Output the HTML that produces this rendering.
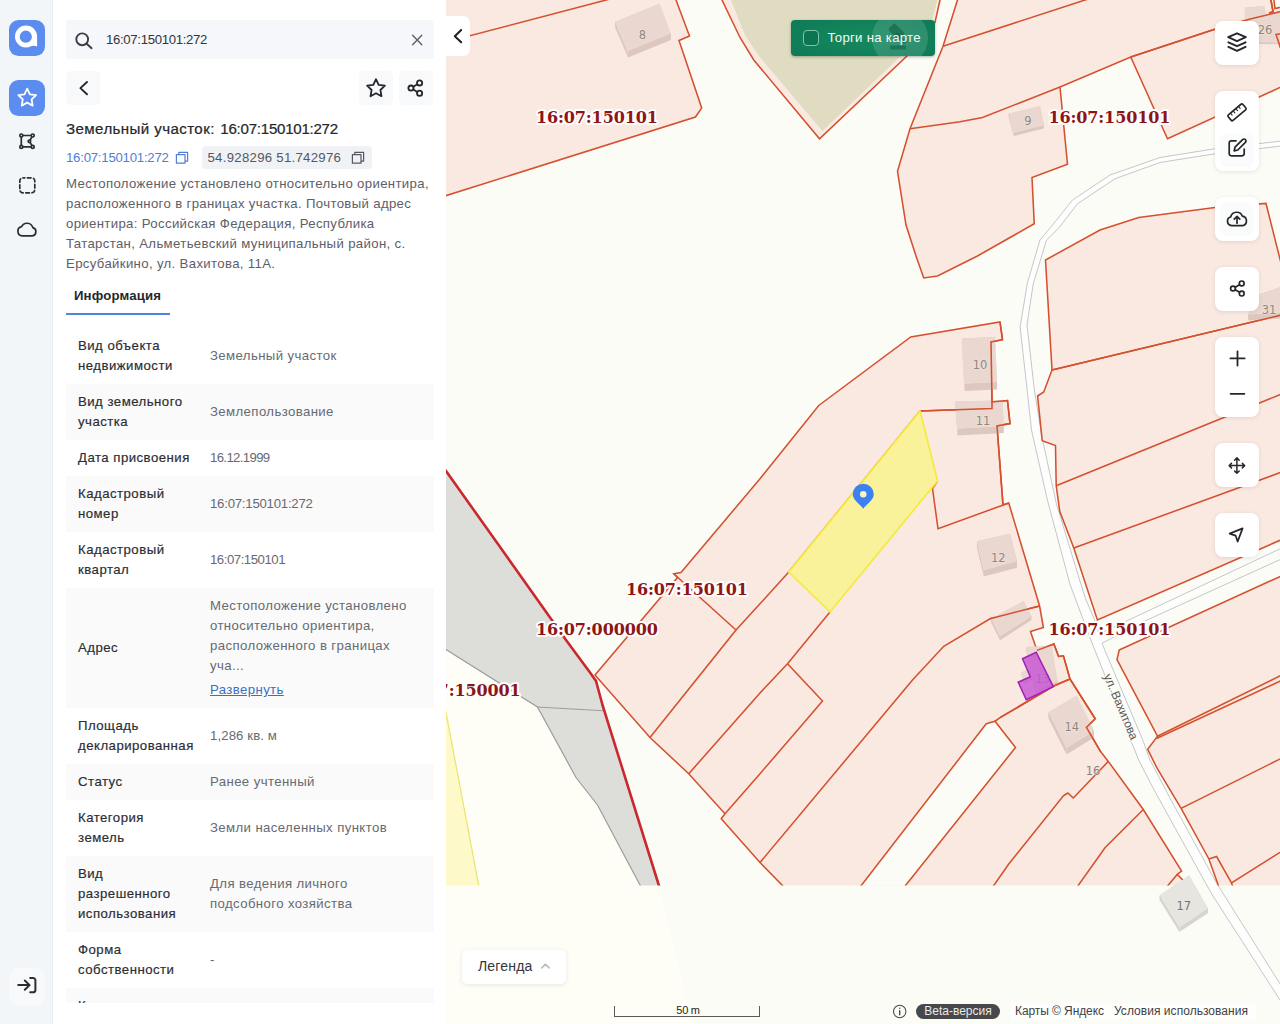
<!DOCTYPE html>
<html lang="ru">
<head>
<meta charset="utf-8">
<title>Земельный участок: 16:07:150101:272</title>
<style>
*{box-sizing:border-box;margin:0;padding:0}
html,body{width:1280px;height:1024px;overflow:hidden;background:#fff;font-family:"Liberation Sans",sans-serif;color:#2b2d33}
.abs{position:absolute}
#side{position:absolute;left:0;top:0;width:53px;height:1024px;background:#f3f6f9;border-right:1px solid #e9edf1}
#panel{position:absolute;left:53px;top:0;width:393px;height:1024px;background:#fff;overflow:hidden}
#map{position:absolute;left:446px;top:0;width:834px;height:1024px;background:#fcfcf7;overflow:hidden}
.sbtn{position:absolute;left:9px;width:36px;height:36px;border-radius:9.5px}
.blue{background:#5b8cef}
.search{position:absolute;left:13px;top:20px;width:368px;height:39px;background:#f5f7fa;border-radius:3px}
.search span{position:absolute;left:40px;top:11px;font-size:13.2px;line-height:17px;color:#33363d;letter-spacing:-0.33px;white-space:nowrap}
.ibtn{position:absolute;width:34px;height:34px;background:#f8f9fb;border-radius:5px;top:71px}
h1{position:absolute;left:13px;top:119px;font-size:15.1px;line-height:20px;font-weight:400;color:#25272c;letter-spacing:0.4px;white-space:nowrap;-webkit-text-stroke:0.22px #25272c}
h1 i{font-style:normal;letter-spacing:-0.26px;margin-left:1px}
.cn{position:absolute;left:13px;top:150px;font-size:13.2px;line-height:16px;color:#4f7fd6;letter-spacing:-0.23px;white-space:nowrap}
.coord{position:absolute;left:148.5px;top:146px;width:170px;height:23px;background:#f0f2f5;border-radius:4px}
.coord span{position:absolute;left:6px;top:4px;font-size:13.2px;line-height:16px;color:#55585f;letter-spacing:0.28px;white-space:nowrap}
.addr{position:absolute;left:13px;top:174px;width:380px;font-size:13.2px;line-height:20px;color:#5d6068;letter-spacing:0.34px;white-space:nowrap}
.tab{position:absolute;left:21px;top:288px;font-size:13.2px;line-height:16px;font-weight:700;color:#25272c;letter-spacing:0.14px}
.tabline{position:absolute;left:13px;top:313px;width:104px;height:2px;background:#4f86d9}
#rows{position:absolute;left:0;top:0;width:393px;height:1003px;overflow:hidden}
.row{position:absolute;left:13px;width:368px}
.row.alt{background:#fafafa}
.row .k{position:absolute;left:12px;font-size:13.2px;line-height:20px;color:#2b2d33;letter-spacing:0.48px;white-space:nowrap;-webkit-text-stroke:0.18px #2b2d33}
.row .v{position:absolute;left:144px;font-size:13.2px;line-height:20px;color:#666a72;letter-spacing:0.39px;white-space:nowrap}
.row .v i{font-style:normal}
.lnk{color:#3b6fc4;text-decoration:underline;display:inline-block;margin-top:4px}
.collapse{position:absolute;left:0;top:16px;width:24px;height:40px;background:#fff;border-radius:0 7px 7px 0}
.torgi{position:absolute;left:345px;top:20px;width:144px;height:36px;border-radius:4px;background:radial-gradient(ellipse 90% 110% at 50% 50%,#16895f 0%,#0f7d58 60%,#0a6e4c 100%);overflow:hidden;box-shadow:0 1px 3px rgba(0,40,20,.35)}
.torgi .glow{position:absolute;left:81px;top:-10px;width:56px;height:56px;border-radius:50%;background:rgba(255,255,255,.13)}
.torgi .gav{position:absolute;left:95px;top:1px}
.torgi .cb{position:absolute;left:12px;top:10px;width:16px;height:16px;border:1.2px solid #7fc4a6;border-radius:4px;background:rgba(0,80,50,.25)}
.torgi span{position:absolute;left:36.5px;top:9px;font-size:13.2px;line-height:17px;color:#f2fbf6;letter-spacing:0.28px;white-space:nowrap}
.mb{position:absolute;left:769px;width:44px;background:#fff;border-radius:8px;box-shadow:0 1px 4px rgba(60,40,30,.12)}
.mb .hov{position:absolute;left:5px;width:34px;height:34px;border-radius:8px;background:#fafbfb}
.legend{position:absolute;left:16px;top:950px;width:104px;height:34px;background:#fff;border-radius:5px;box-shadow:0 1px 4px rgba(60,60,40,.12)}
.legend span{position:absolute;left:16px;top:8px;font-size:14px;line-height:17px;color:#33363c;letter-spacing:0.18px}
.scale{position:absolute;left:168px;top:1006px;width:146px;height:11px;border:1px solid #5a5a5a;border-top:none}
.scale span{position:absolute;left:0;width:146px;text-align:center;top:-2px;font-size:11px;line-height:12px;color:#222;letter-spacing:-0.25px}
.beta{position:absolute;left:470px;top:1004px;width:84px;height:15px;border-radius:8px;background:#46484b;color:#e9e9e9;font-size:12px;line-height:15px;text-align:center;letter-spacing:0}
.copy{position:absolute;left:564px;top:1003px;width:246px;height:17px;background:rgba(255,255,255,.7)}
.copy span{position:absolute;top:1px;font-size:12px;line-height:15px;color:#3f4142;white-space:nowrap}
</style>
</head>
<body>
<div id="side">
  <div class="sbtn blue" style="top:20px"></div>
  <div class="sbtn blue" style="top:80px"></div>
  <div class="sbtn" style="top:968px;background:#f7f9fb;height:38px"></div>
  <svg width="53" height="1024" viewBox="0 0 53 1024" style="position:absolute;left:0;top:0" fill="none" stroke-linecap="round" stroke-linejoin="round">
    <path d="M26 25.5 A11 11 0 0 0 26 47.5 A11 11 0 0 0 31 46.3 Q33.8 45.3 37.1 46.5 L37.1 36.5 A11 11 0 0 0 26 25.5Z M25.8 30.6 A6.1 6.1 0 1 1 25.8 42.8 A6.1 6.1 0 1 1 25.8 30.6Z" fill="#fff" fill-rule="evenodd" stroke="none"/>
    <path d="M27.2 88.6 L29.9 94.3 L36.1 95.1 L31.6 99.4 L32.7 105.6 L27.2 102.6 L21.7 105.6 L22.8 99.4 L18.3 95.1 L24.5 94.3Z" stroke="#fff" stroke-width="1.8"/>
    <g stroke="#2b2d33" stroke-width="1.7">
      <path d="M21.3 135.5 L32.7 135.5 L29.4 141.3 L32.7 146.9 L21.3 146.9Z"/>
      <circle cx="21.3" cy="135.5" r="1.5" fill="#f3f6f9"/><circle cx="32.7" cy="135.5" r="1.5" fill="#f3f6f9"/><circle cx="21.3" cy="146.9" r="1.5" fill="#f3f6f9"/><circle cx="32.7" cy="146.9" r="1.5" fill="#f3f6f9"/><circle cx="29.4" cy="141.3" r="1.3" fill="#f3f6f9"/>
      <rect x="19.8" y="177.8" width="15" height="15" rx="3.2" stroke-dasharray="3.6 2.6" stroke-dashoffset="1.8"/>
      <path d="M22.2 235.8 A4.6 4.6 0 0 1 21.6 226.7 A6 6 0 0 1 32.8 227.6 A4.2 4.2 0 0 1 32.4 235.8Z"/>
      <path d="M18.2 985.1 L29.4 985.1 M24.8 980.5 L29.6 985.1 L24.8 989.8 M30.2 977.9 L33 977.9 A2.4 2.4 0 0 1 35.4 980.3 L35.4 989.9 A2.4 2.4 0 0 1 33 992.3 L30.2 992.3" stroke-width="2"/>
    </g>
  </svg>
</div>
<div id="panel">
  <div class="search"><span>16:07:150101:272</span></div>
  <div class="ibtn" style="left:13px"></div>
  <div class="ibtn" style="left:306px"></div>
  <div class="ibtn" style="left:346px"></div>
  <h1>Земельный участок: <i>16:07:150101:272</i></h1>
  <div class="cn">16:07:150101:272</div>
  <div class="coord"><span>54.928296 51.742976</span></div>
  <div class="addr">Местоположение установлено относительно ориентира,<br>расположенного в границах участка. Почтовый адрес<br>ориентира: Российская Федерация, Республика<br>Татарстан, Альметьевский муниципальный район, с.<br>Ерсубайкино, ул. Вахитова, 11А.</div>
  <svg width="393" height="200" viewBox="53 0 393 200" style="position:absolute;left:0;top:0" fill="none" stroke-linecap="round" stroke-linejoin="round">
    <g stroke="#3a3d44" stroke-width="1.9"><circle cx="82.2" cy="39.3" r="5.9"/><path d="M86.6 43.7 L91.6 48.2"/></g>
    <path d="M412.6 35.3 L421.8 44.7 M421.8 35.3 L412.6 44.7" stroke="#5a5d64" stroke-width="1.3"/>
    <path d="M87 82 L80.4 88.1 L87 94.3" stroke="#25272c" stroke-width="1.9"/>
    <path d="M376 79.2 L378.7 84.9 L384.9 85.7 L380.4 90 L381.5 96.2 L376 93.2 L370.5 96.2 L371.6 90 L367.1 85.7 L373.3 84.9Z" stroke="#25272c" stroke-width="1.8"/>
    <g stroke="#25272c" stroke-width="1.8"><circle cx="419.6" cy="82.9" r="2.6"/><circle cx="411" cy="88.1" r="2.6"/><circle cx="419.6" cy="93.3" r="2.6"/><path d="M413.3 86.8 L417.3 84.3 M413.3 89.4 L417.3 91.9"/></g>
    <g stroke="#4f7fd6" stroke-width="1.2"><rect x="176.4" y="154.6" width="8.6" height="8.6"/><path d="M178.8 154.4 L178.8 152.4 L187.6 152.4 L187.6 161.2 L185.4 161.2"/></g>
    <g stroke="#55585f" stroke-width="1.2"><rect x="352.4" y="154.6" width="8.6" height="8.6"/><path d="M354.8 154.4 L354.8 152.4 L363.6 152.4 L363.6 161.2 L361.4 161.2"/></g>
  </svg>
  <div class="tab">Информация</div>
  <div class="tabline"></div>
  <div id="rows">
  <div class="row" style="top:328px;height:56px"><div class="k" style="top:8px">Вид объекта<br>недвижимости</div><div class="v" style="top:18px">Земельный участок</div></div>
  <div class="row alt" style="top:384px;height:56px"><div class="k" style="top:8px">Вид земельного<br>участка</div><div class="v" style="top:18px">Землепользование</div></div>
  <div class="row" style="top:440px;height:36px"><div class="k" style="top:8px">Дата присвоения</div><div class="v" style="top:8px"><i style="letter-spacing:-0.65px">16.12.1999</i></div></div>
  <div class="row alt" style="top:476px;height:56px"><div class="k" style="top:8px">Кадастровый<br>номер</div><div class="v" style="top:18px"><i style="letter-spacing:-0.23px">16:07:150101:272</i></div></div>
  <div class="row" style="top:532px;height:56px"><div class="k" style="top:8px">Кадастровый<br>квартал</div><div class="v" style="top:18px"><i style="letter-spacing:-0.47px">16:07:150101</i></div></div>
  <div class="row alt" style="top:588px;height:120px"><div class="k" style="top:50px">Адрес</div><div class="v" style="top:8px">Местоположение установлено<br>относительно ориентира,<br>расположенного в границах<br>уча...<br><a class="lnk">Развернуть</a></div></div>
  <div class="row" style="top:708px;height:56px"><div class="k" style="top:8px">Площадь<br>декларированная</div><div class="v" style="top:18px"><i style="letter-spacing:0.11px">1,286 кв. м</i></div></div>
  <div class="row alt" style="top:764px;height:36px"><div class="k" style="top:8px">Статус</div><div class="v" style="top:8px">Ранее учтенный</div></div>
  <div class="row" style="top:800px;height:56px"><div class="k" style="top:8px">Категория<br>земель</div><div class="v" style="top:18px">Земли населенных пунктов</div></div>
  <div class="row alt" style="top:856px;height:76px"><div class="k" style="top:8px">Вид<br>разрешенного<br>использования</div><div class="v" style="top:18px">Для ведения личного<br>подсобного хозяйства</div></div>
  <div class="row" style="top:932px;height:56px"><div class="k" style="top:8px">Форма<br>собственности</div><div class="v" style="top:18px">-</div></div>
  <div class="row alt" style="top:988px;height:56px"><div class="k" style="top:8px">Кадастровая<br>стоимость</div><div class="v" style="top:18px">-</div></div>
  </div><!--/rows-->
</div>
<div id="map">
<!--MAP-->
<svg width="834" height="1024" viewBox="446 0 834 1024" style="position:absolute;left:0;top:0">
<defs><clipPath id="ov"><rect x="440" y="-5" width="850" height="890.5"/></clipPath></defs>
<rect x="440" y="-5" width="850" height="1034" fill="#fcfcf7"/>
<polygon points="1290,140 1215,148.75 1160,157.5 1110,175 1072.5,200 1052.5,225 1040,240 1027.4,283 1020.1,327 1027.4,392.4 1031.5,430 1047.6,500.8 1070.1,584.6 1090.6,639.4 1131.6,742.5 1138.7,760 1152,786 1160.2,801 1203.9,880 1213,896 1280,1000 1290,1016 1290,998 1290,1000 1280,983.75 1216.9,883.75 1171,800 1150,760 1142.5,739.4 1101.9,643.3 1290,555.1 1147.2,620 1101.9,643.3 1290,544.2 1125.3,621.6 1099,634 1099,634 1095.9,623.2 1085.1,597.5 1074.4,563 1056.2,503 1041.8,436.4 1034.2,388.5 1027,325 1033.2,284 1046.5,240 1058,229 1077.5,203.75 1115,178.75 1160,162.5 1215,153.75 1290,145" fill="#fefefc"/>
<polyline points="1290,140 1215,148.75 1160,157.5 1110,175 1072.5,200 1052.5,225 1040,240 1027.4,283 1020.1,327 1027.4,392.4 1031.5,430 1047.6,500.8 1070.1,584.6 1090.6,639.4 1131.6,742.5 1138.7,760 1152,786 1160.2,801 1203.9,880 1213,896 1280,1000 1290,1016" fill="none" stroke="#bcc1c4" stroke-width="0.9"/>
<polyline points="1290,145 1215,153.75 1160,162.5 1115,178.75 1077.5,203.75 1058,229 1046.5,240 1033.2,284 1027,325 1034.2,388.5 1041.8,436.4 1056.2,503 1074.4,563 1085.1,597.5 1095.9,623.2 1099,634" fill="none" stroke="#bcc1c4" stroke-width="0.9"/>
<polyline points="1101.9,643.3 1142.5,739.4 1150,760 1171,800 1216.9,883.75 1280,983.75 1290,1000" fill="none" stroke="#bcc1c4" stroke-width="0.9"/>
<polyline points="1099,634 1125.3,621.6 1290,544.2" fill="none" stroke="#bcc1c4" stroke-width="0.9"/>
<polyline points="1101.9,643.3 1147.2,620 1290,555.1" fill="none" stroke="#bcc1c4" stroke-width="0.9"/>
<polygon points="440,640 566,640 602.5,705 658.75,885 693,1030 440,1030" fill="#fefef6"/>
<g clip-path="url(#ov)">
<polygon points="440,700 446,712.5 478.75,885.5 480,890 440,890" fill="#fdf9c9"/>
<polyline points="443,700 446,712.5 478.75,885.5 480,890" fill="none" stroke="#ebe46a" stroke-width="1.2"/>
<polygon points="440,463 446.25,471.25 566,640 590,672.5 596,681 602.5,705 603,710.75 537.5,707 446,649.5 440,646" fill="#dddeda"/>
<polygon points="537.5,707 603,710.75 658.75,885 660,890 642,890 640,885 597.5,805 576,777.5" fill="#dddeda"/>
<polyline points="440,646 446,649.5 537.5,707 576,777.5 597.5,805 640,885 642,890" fill="none" stroke="#9c9d9b" stroke-width="1.2"/>
<polyline points="537.5,707 603,710.75" fill="none" stroke="#9c9d9b" stroke-width="1.2"/>
<polygon points="440,-10 673,-10 676,0 689.5,36 679,40.5 701.7,108 695.5,117 440,197.5" fill="#fae9e1" stroke="#d5502e" stroke-width="1.55" stroke-linejoin="miter"/>
<polygon points="721,-5 722,0 740,37.5 753.75,60 819.5,138.75 907.5,55.5 935,22.5 940,0 942,-5" fill="#fae9e1" stroke="#d5502e" stroke-width="1.55" stroke-linejoin="miter"/>
<polygon points="957.5,0 943,46.25 910,128.75 897.5,171.25 906,225 916,256 923.75,278 937.5,276 977.5,256 1034.25,223.75 1032,177.5 1067.5,164.25 1060,87 1130.75,57 1167.5,138.75 1280,87.5 1290,83 1290,-10 959,-10" fill="#fae9e1" stroke="#d5502e" stroke-width="1.55" stroke-linejoin="miter"/>
<polygon points="1045.5,260 1100,230 1138.75,217.5 1215,207.5 1266,203.4 1283,271 1290,300 1290,535.5 1280,540.3 1097.4,620 1073.8,548 1059.8,511.6 1056.2,485.8 1055.5,445.5 1042.2,440.7 1037.6,396 1043.75,392 1052,370" fill="#fae9e1" stroke="#d5502e" stroke-width="1.55" stroke-linejoin="miter"/>
<polygon points="1119.2,650 1290,572 1290,890 1220,890 1208.9,859 1181.1,808.4 1157.5,769 1147.7,749.4 1157.5,736.25 1117,659.7" fill="#fae9e1" stroke="#d5502e" stroke-width="1.55" stroke-linejoin="miter"/>
<polygon points="818.75,405.5 910.75,337 1000,322 1002.5,339.75 991,342 992,402 1007.5,400.5 1010,423.5 997,426 1003,505 1008.75,503 1039.6,606 1043.4,627.5 1030.5,631.6 1037,650.4 1053.9,644 1058.6,656.4 1063.4,655.75 1070,679 1095.2,718.75 1086.4,727.5 1100.6,751.6 1108.3,761.4 1143.3,809.5 1181.6,871 1177.2,874.4 1187,884.2 1190,892 788,892 782.5,885.5 760,862.5 721.25,818.75 725,813.75 688.75,773.75 650,737.5 595,675 677.5,577.5 673.75,573.75 681,572.5 760,478.75" fill="#fae9e1" stroke="#d5502e" stroke-width="1.55" stroke-linejoin="miter"/>
<polygon points="731,-5 731,0 745,35 758.75,56 822.5,131 905,52 932,20 937.5,0 938,-5" fill="#dfdcc2"/>
<polygon points="986.25,723.75 995,721.25 1015.5,747.5 905.5,885.5 900,892 856,892 861.25,885.5" fill="#fcfcf7" stroke="#d5502e" stroke-width="1.55"/>
<polyline points="440,43.6 610,-1" fill="none" stroke="#d5502e" stroke-width="1.55"/>
<polyline points="943,46.25 1090,-1.6" fill="none" stroke="#d5502e" stroke-width="1.55"/>
<polyline points="910,128.75 960,121.75 982.5,117.5 1060,87" fill="none" stroke="#d5502e" stroke-width="1.55"/>
<polyline points="1130.75,57 1214,29.5 1250.3,19.1 1285,10.5" fill="none" stroke="#d5502e" stroke-width="1.55"/>
<polyline points="1270.6,-2 1273,11.7 1269,12.9" fill="none" stroke="#d5502e" stroke-width="1.55"/>
<polyline points="1285,33.5 1276,34.4 1282,52" fill="none" stroke="#d5502e" stroke-width="1.55"/>
<polyline points="1052,370 1290,313" fill="none" stroke="#d5502e" stroke-width="1.55"/>
<polyline points="1056.2,485.8 1290,390.6" fill="none" stroke="#d5502e" stroke-width="1.55"/>
<polyline points="1073.8,548 1290,469" fill="none" stroke="#d5502e" stroke-width="1.55"/>
<polyline points="1157.5,736.25 1290,671" fill="none" stroke="#d5502e" stroke-width="1.55"/>
<polyline points="1156.5,738.5 1290,676.5" fill="none" stroke="#d5502e" stroke-width="1.55"/>
<polyline points="1181.1,808.4 1290,754" fill="none" stroke="#d5502e" stroke-width="1.55"/>
<polyline points="1208.9,859 1216.6,856.5 1231.5,883 1290,846" fill="none" stroke="#d5502e" stroke-width="1.55"/>
<polyline points="1231.5,883 1234,890" fill="none" stroke="#d5502e" stroke-width="1.55"/>
<polyline points="992,402 992,408.5 920,411" fill="none" stroke="#d5502e" stroke-width="1.55"/>
<polyline points="736,630 760,603.75 788.75,572 920,411" fill="none" stroke="#d5502e" stroke-width="1.55"/>
<polyline points="673.75,573.75 736,630 650,737.5" fill="none" stroke="#d5502e" stroke-width="1.55"/>
<polyline points="830,612 787.5,663.75 760,693 688.75,773.75" fill="none" stroke="#d5502e" stroke-width="1.55"/>
<polyline points="787.5,663.75 822.5,701 792.5,736 760,773.75 725,813.75" fill="none" stroke="#d5502e" stroke-width="1.55"/>
<polyline points="937.5,481 932.5,488.5 938,528.75 1008.75,503" fill="none" stroke="#d5502e" stroke-width="1.55"/>
<polyline points="1039.6,606 990,618.75 943.75,646.25 912.5,680 760,862.5" fill="none" stroke="#d5502e" stroke-width="1.55"/>
<polyline points="1070,679 1053.6,686 1000,717.7 995,721.25" fill="none" stroke="#d5502e" stroke-width="1.55"/>
<polyline points="1108.3,761.4 1073.3,798 1067.8,793 1063.4,795.75 1008.75,864 992,888" fill="none" stroke="#d5502e" stroke-width="1.55"/>
<polyline points="1143.3,809.5 1105,847.7 1075,890" fill="none" stroke="#d5502e" stroke-width="1.55"/>
<polyline points="1177.2,874.4 1165,889" fill="none" stroke="#d5502e" stroke-width="1.55"/>
<polyline points="438,460 446.25,471.25 566,640 590,672.5 596,681 602.5,705 658.75,885 661,892" fill="none" stroke="#c9292e" stroke-width="2.6" stroke-linejoin="round"/>
<polygon points="615,22 659.5,3.75 660,10.25 615.5,28.5" fill="#dcc8c0"/><polygon points="659.5,3.75 670.5,33.5 671,40 660,10.25" fill="#dcc8c0"/><polygon points="670.5,33.5 627.5,51 628,57.5 671,40" fill="#dcc8c0"/><polygon points="627.5,51 615,22 615.5,28.5 628,57.5" fill="#dcc8c0"/><polygon points="615,22 659.5,3.75 670.5,33.5 627.5,51" fill="#ead8d0"/>
<polygon points="1008.75,113.75 1040,106 1040,109.5 1008.75,117.25" fill="#dcc8c0"/><polygon points="1040,106 1043.75,125 1043.75,128.5 1040,109.5" fill="#dcc8c0"/><polygon points="1043.75,125 1013.75,132.5 1013.75,136 1043.75,128.5" fill="#dcc8c0"/><polygon points="1013.75,132.5 1008.75,113.75 1008.75,117.25 1013.75,136" fill="#dcc8c0"/><polygon points="1008.75,113.75 1040,106 1043.75,125 1013.75,132.5" fill="#ead8d0"/>
<polygon points="962,338.5 995,337 995,344.5 962,346" fill="#dcc8c0"/><polygon points="995,337 997,382 997,389.5 995,344.5" fill="#dcc8c0"/><polygon points="997,382 964.5,383.5 964.5,391 997,389.5" fill="#dcc8c0"/><polygon points="964.5,383.5 962,338.5 962,346 964.5,391" fill="#dcc8c0"/><polygon points="962,338.5 995,337 997,382 964.5,383.5" fill="#ead8d0"/>
<polygon points="955.5,401.5 1002.5,400.5 1002.5,407.5 955.5,408.5" fill="#dcc8c0"/><polygon points="1002.5,400.5 1003.75,426 1003.75,433 1002.5,407.5" fill="#dcc8c0"/><polygon points="1003.75,426 957.5,428.5 957.5,435.5 1003.75,433" fill="#dcc8c0"/><polygon points="957.5,428.5 955.5,401.5 955.5,408.5 957.5,435.5" fill="#dcc8c0"/><polygon points="955.5,401.5 1002.5,400.5 1003.75,426 957.5,428.5" fill="#ead8d0"/>
<polygon points="977,541.25 1010,533.75 1010,540.25 977,547.75" fill="#dcc8c0"/><polygon points="1010,533.75 1017,561.25 1017,567.75 1010,540.25" fill="#dcc8c0"/><polygon points="1017,561.25 983.75,570 983.75,576.5 1017,567.75" fill="#dcc8c0"/><polygon points="983.75,570 977,541.25 977,547.75 983.75,576.5" fill="#dcc8c0"/><polygon points="977,541.25 1010,533.75 1017,561.25 983.75,570" fill="#ead8d0"/>
<polygon points="991.25,618.75 1023.75,601.25 1023.75,605.25 991.25,622.75" fill="#dcc8c0"/><polygon points="1023.75,601.25 1031.25,616.25 1031.25,620.25 1023.75,605.25" fill="#dcc8c0"/><polygon points="1031.25,616.25 1000,636.25 1000,640.25 1031.25,620.25" fill="#dcc8c0"/><polygon points="1000,636.25 991.25,618.75 991.25,622.75 1000,640.25" fill="#dcc8c0"/><polygon points="991.25,618.75 1023.75,601.25 1031.25,616.25 1000,636.25" fill="#ead8d0"/>
<polygon points="1026,647 1051.6,645.7 1051.6,648.7 1026,650" fill="#dcc8c0"/><polygon points="1051.6,645.7 1057.4,681 1057.4,684 1051.6,648.7" fill="#dcc8c0"/><polygon points="1057.4,681 1036,690 1036,693 1057.4,684" fill="#dcc8c0"/><polygon points="1036,690 1026,647 1026,650 1036,693" fill="#dcc8c0"/><polygon points="1026,647 1051.6,645.7 1057.4,681 1036,690" fill="#ead8d0"/>
<polygon points="1021.5,672.5 1030.5,668 1030.5,670 1021.5,674.5" fill="#dcc8c0"/><polygon points="1030.5,668 1033,677.5 1033,679.5 1030.5,670" fill="#dcc8c0"/><polygon points="1033,677.5 1024,682 1024,684 1033,679.5" fill="#dcc8c0"/><polygon points="1024,682 1021.5,672.5 1021.5,674.5 1024,684" fill="#dcc8c0"/><polygon points="1021.5,672.5 1030.5,668 1033,677.5 1024,682" fill="#ead8d0"/>
<polygon points="1048.6,712.2 1076.6,695.8 1076.6,702.3 1048.6,718.7" fill="#dcc8c0"/><polygon points="1076.6,695.8 1094,731 1094,737.5 1076.6,702.3" fill="#dcc8c0"/><polygon points="1094,731 1066.5,748 1066.5,754.5 1094,737.5" fill="#dcc8c0"/><polygon points="1066.5,748 1048.6,712.2 1048.6,718.7 1066.5,754.5" fill="#dcc8c0"/><polygon points="1048.6,712.2 1076.6,695.8 1094,731 1066.5,748" fill="#ead8d0"/>
<polygon points="1244.8,7.8 1264,5.9 1264,7.7 1244.8,9.6" fill="#dcc8c0"/><polygon points="1264,5.9 1266,14.5 1266,16.3 1264,7.7" fill="#dcc8c0"/><polygon points="1266,14.5 1290,10 1290,11.8 1266,16.3" fill="#dcc8c0"/><polygon points="1290,10 1290,42.6 1290,44.4 1290,11.8" fill="#dcc8c0"/><polygon points="1290,42.6 1247,42 1247,43.8 1290,44.4" fill="#dcc8c0"/><polygon points="1247,42 1244.8,19 1244.8,20.8 1247,43.8" fill="#dcc8c0"/><polygon points="1244.8,19 1244.8,7.8 1244.8,9.6 1244.8,20.8" fill="#dcc8c0"/><polygon points="1244.8,7.8 1264,5.9 1266,14.5 1290,10 1290,42.6 1247,42 1244.8,19" fill="#ead8d0"/>
<polygon points="1273.6,-3 1275,8.6 1290,5 1290,-3" fill="#fcfcf7" stroke="#d5502e" stroke-width="1.55"/>
<polygon points="1248.3,314.4 1255,295.8 1255,301.8 1248.3,320.4" fill="#dcc8c0"/><polygon points="1255,295.8 1290,284 1290,290 1255,301.8" fill="#dcc8c0"/><polygon points="1290,284 1290,312 1290,318 1290,290" fill="#dcc8c0"/><polygon points="1290,312 1248.3,314.4 1248.3,320.4 1290,318" fill="#dcc8c0"/><polygon points="1248.3,314.4 1255,295.8 1290,284 1290,312" fill="#ead8d0"/>
</g>
<polygon points="1159.7,895.2 1189.2,875.5 1189.2,880.5 1159.7,900.2" fill="#d6d5d0"/><polygon points="1189.2,875.5 1207.8,908.3 1207.8,913.3 1189.2,880.5" fill="#d6d5d0"/><polygon points="1207.8,908.3 1179.4,926.9 1179.4,931.9 1207.8,913.3" fill="#d6d5d0"/><polygon points="1179.4,926.9 1159.7,895.2 1159.7,900.2 1179.4,931.9" fill="#d6d5d0"/><polygon points="1159.7,895.2 1189.2,875.5 1207.8,908.3 1179.4,926.9" fill="#e6e5e0"/>
<g clip-path="url(#ov)">
<polyline points="1000,322 1002.5,339.75 991,342 992,402 1007.5,400.5 1010,423.5 997,426 1003,505" fill="none" stroke="#d5502e" stroke-width="1.55"/>
<polyline points="992,402 992,408.5 920,411" fill="none" stroke="#d5502e" stroke-width="1.55"/>
<polyline points="1039.6,606 990,618.75" fill="none" stroke="#d5502e" stroke-width="1.55"/>
<polyline points="1037,650.4 1053.9,644 1058.6,656.4 1063.4,655.75 1070,679 1053.6,686 1000,717.7" fill="none" stroke="#d5502e" stroke-width="1.55"/>
<polyline points="1070,679 1095.2,718.75 1086.4,727.5 1100.6,751.6" fill="none" stroke="#d5502e" stroke-width="1.55"/>
<polyline points="1130.75,57 1214,29.5 1250.3,19.1 1285,10.5" fill="none" stroke="#d5502e" stroke-width="1.55"/>
<polyline points="1270.6,-2 1273,11.7 1269,12.9" fill="none" stroke="#d5502e" stroke-width="1.55"/>
<polyline points="1285,33.5 1276,34.4 1282,52" fill="none" stroke="#d5502e" stroke-width="1.55"/>
<polyline points="1052,370 1290,313" fill="none" stroke="#d5502e" stroke-width="1.55"/>
<polygon points="920,411 937.5,481 830,612 788.75,572" fill="#f9f29b" stroke="#f5ea3e" stroke-width="1.7" stroke-linejoin="round"/>
</g>
<text x="642.5" y="38.5" font-family="'DejaVu Sans',sans-serif" font-size="11.5" fill="#8f8680" text-anchor="middle" stroke="#f3e6df" stroke-width="1.5" paint-order="stroke" stroke-opacity="0.6">8</text>
<text x="1028" y="125" font-family="'DejaVu Sans',sans-serif" font-size="11.5" fill="#8f8680" text-anchor="middle" stroke="#f3e6df" stroke-width="1.5" paint-order="stroke" stroke-opacity="0.6">9</text>
<text x="980" y="369" font-family="'DejaVu Sans',sans-serif" font-size="11.5" fill="#8f8680" text-anchor="middle" stroke="#f3e6df" stroke-width="1.5" paint-order="stroke" stroke-opacity="0.6">10</text>
<text x="983" y="425" font-family="'DejaVu Sans',sans-serif" font-size="11.5" fill="#8f8680" text-anchor="middle" stroke="#f3e6df" stroke-width="1.5" paint-order="stroke" stroke-opacity="0.6">11</text>
<text x="998.25" y="562.25" font-family="'DejaVu Sans',sans-serif" font-size="11.5" fill="#8f8680" text-anchor="middle" stroke="#f3e6df" stroke-width="1.5" paint-order="stroke" stroke-opacity="0.6">12</text>
<text x="1042.5" y="683.25" font-family="'DejaVu Sans',sans-serif" font-size="11.5" fill="#8f8680" text-anchor="middle" stroke="#f3e6df" stroke-width="1.5" paint-order="stroke" stroke-opacity="0.6">13</text>
<text x="1071.75" y="731" font-family="'DejaVu Sans',sans-serif" font-size="11.5" fill="#8f8680" text-anchor="middle" stroke="#f3e6df" stroke-width="1.5" paint-order="stroke" stroke-opacity="0.6">14</text>
<text x="1093" y="774.8" font-family="'DejaVu Sans',sans-serif" font-size="11.5" fill="#8f8680" text-anchor="middle" stroke="#f3e6df" stroke-width="1.5" paint-order="stroke" stroke-opacity="0.6">16</text>
<text x="1265" y="34" font-family="'DejaVu Sans',sans-serif" font-size="11.5" fill="#8f8680" text-anchor="middle" stroke="#f3e6df" stroke-width="1.5" paint-order="stroke" stroke-opacity="0.6">26</text>
<text x="1269" y="313.5" font-family="'DejaVu Sans',sans-serif" font-size="11.5" fill="#8f8680" text-anchor="middle" stroke="#f3e6df" stroke-width="1.5" paint-order="stroke" stroke-opacity="0.6">31</text>
<polygon points="1022.5,658.7 1036.2,652.2 1053.3,686.6 1026.25,699.8 1018.2,682.2 1030.3,676.8" fill="#c653d4" fill-opacity="0.8" stroke="#a31fb5" stroke-width="1.55"/>
<text x="1183.75" y="910" font-family="'DejaVu Sans',sans-serif" font-size="11.5" fill="#77756f" text-anchor="middle">17</text>
<text transform="translate(1103.5,676) rotate(67)" font-family="'Liberation Sans',sans-serif" font-size="12" fill="#55585a" letter-spacing="-0.14" stroke="#fcfcf7" stroke-width="2" paint-order="stroke">ул. Вахитова</text>
<text x="536" y="123" font-family="'DejaVu Serif',serif" font-weight="700" font-size="16" letter-spacing="-0.12" fill="#8c1518" stroke="#fffefc" stroke-width="4" stroke-linejoin="round" paint-order="stroke" text-anchor="start">16:07:150101</text>
<text x="1048.5" y="123" font-family="'DejaVu Serif',serif" font-weight="700" font-size="16" letter-spacing="-0.12" fill="#8c1518" stroke="#fffefc" stroke-width="4" stroke-linejoin="round" paint-order="stroke" text-anchor="start">16:07:150101</text>
<text x="626" y="595" font-family="'DejaVu Serif',serif" font-weight="700" font-size="16" letter-spacing="-0.12" fill="#8c1518" stroke="#fffefc" stroke-width="4" stroke-linejoin="round" paint-order="stroke" text-anchor="start">16:07:150101</text>
<text x="536" y="635" font-family="'DejaVu Serif',serif" font-weight="700" font-size="16" letter-spacing="-0.12" fill="#8c1518" stroke="#fffefc" stroke-width="4" stroke-linejoin="round" paint-order="stroke" text-anchor="start">16:07:000000</text>
<text x="1048.5" y="634.7" font-family="'DejaVu Serif',serif" font-weight="700" font-size="16" letter-spacing="-0.12" fill="#8c1518" stroke="#fffefc" stroke-width="4" stroke-linejoin="round" paint-order="stroke" text-anchor="start">16:07:150101</text>
<text x="520.5" y="695.5" font-family="'DejaVu Serif',serif" font-weight="700" font-size="16" letter-spacing="-0.12" fill="#8c1518" stroke="#fffefc" stroke-width="4" stroke-linejoin="round" paint-order="stroke" text-anchor="end">16:07:150001</text>
<g transform="translate(863.25,494.75)"><path d="M0,14 C-3,9.5 -10.5,5.5 -10.5,-0.5 A10.5,10.5 0 1 1 10.5,-0.5 C10.5,5.5 3,9.5 0,14Z" fill="#3b82f0"/><circle cx="0" cy="-0.5" r="3.2" fill="#fdf6c0"/></g>
</svg>
<!--/MAP-->
<!--UI-->
<div class="collapse"></div>
<div class="torgi"><div class="glow"></div><svg class="gav" width="30" height="30" viewBox="0 0 30 30"><g fill="rgba(0,70,45,.38)"><rect x="6" y="3" width="9" height="15" rx="1.5" transform="rotate(-45 10.5 10.5)"/><rect x="13" y="11" width="3.4" height="13" transform="rotate(-45 14.7 17.5)"/><rect x="4" y="24.5" width="16" height="4" rx="1"/></g></svg><div class="cb"></div><span>Торги на карте</span></div>
<div class="mb" style="top:21px;height:44px"></div>
<div class="mb" style="top:91px;height:80px"><div class="hov" style="top:42px"></div></div>
<div class="mb" style="top:197px;height:44px"><div class="hov" style="top:5px"></div></div>
<div class="mb" style="top:267px;height:44px"></div>
<div class="mb" style="top:337px;height:80px"></div>
<div class="mb" style="top:443px;height:44px"></div>
<div class="mb" style="top:513px;height:44px"></div>
<div class="legend"><span>Легенда</span></div>
<div class="scale"><span>50 m</span></div>
<div class="beta">Beta-версия</div>
<div class="copy"><span style="left:5px;letter-spacing:-0.08px">Карты © Яндекс</span><span style="left:104px;letter-spacing:0.04px">Условия использования</span></div>
<svg width="834" height="1024" viewBox="446 0 834 1024" style="position:absolute;left:0;top:0" fill="none" stroke-linecap="round" stroke-linejoin="round">
  <path d="M461.2 30 L454.8 36.2 L461.2 42.3" stroke="#1f2126" stroke-width="2"/>
  <g stroke="#25272c" stroke-width="1.7">
    <path d="M1237 33.3 L1245.8 37.2 L1237 41.1 L1228.2 37.2Z" stroke-width="1.9"/>
    <path d="M1228.4 42.3 L1237 46.2 L1245.6 42.3 M1228.4 46.8 L1237 50.8 L1245.6 46.8" stroke-width="1.9"/>
    <g transform="translate(1237,112.3) rotate(-40)"><rect x="-9.6" y="-3.6" width="19.2" height="7.2" rx="1.4"/><path d="M-5.5 -3.4 L-5.5 -1 M-2 -3.4 L-2 -1 M1.5 -3.4 L1.5 -1 M5 -3.4 L5 -1" stroke-width="1.1"/></g>
    <path d="M1236 140.8 L1231.4 140.8 A2.2 2.2 0 0 0 1229.2 143 L1229.2 153.6 A2.2 2.2 0 0 0 1231.4 155.8 L1242 155.8 A2.2 2.2 0 0 0 1244.2 153.6 L1244.2 149"/>
    <path d="M1242.6 139.6 A1.9 1.9 0 0 1 1245.4 142.4 L1237.8 150 L1234.2 150.8 L1235 147.2Z"/>
    <path d="M1231.6 225.6 A4.4 4.4 0 0 1 1230.6 217 A6.2 6.2 0 0 1 1242.4 216.2 A4.8 4.8 0 0 1 1242.8 225.6Z"/>
    <path d="M1237 223.2 L1237 216.6 M1234.2 219.2 L1237 216.4 L1239.8 219.2"/>
    <circle cx="1241.7" cy="283.4" r="2.4"/><circle cx="1233" cy="288.5" r="2.4"/><circle cx="1241.7" cy="293.6" r="2.4"/><path d="M1235.2 287.3 L1239.5 284.7 M1235.2 289.7 L1239.5 292.3"/>
    <path d="M1230.4 358.4 L1244.6 358.4 M1237.5 351.3 L1237.5 365.5 M1230.6 393.8 L1244.4 393.8" stroke-width="1.8"/>
    <path d="M1229.2 465.6 L1244.6 465.6 M1236.9 457.9 L1236.9 473.3 M1234.6 460.2 L1236.9 457.9 L1239.2 460.2 M1234.6 471 L1236.9 473.3 L1239.2 471 M1231.5 463.3 L1229.2 465.6 L1231.5 467.9 M1242.3 463.3 L1244.6 465.6 L1242.3 467.9" stroke-width="1.5"/>
    <path d="M1242.6 528.4 L1229.6 533.6 L1235.6 535.6 L1237.6 541.6Z"/>
  </g>
  <path d="M541.6 968 L545.4 964.2 L549.2 968" stroke="#b4b7bd" stroke-width="1.6"/>
  <g stroke="#4a4c50" stroke-width="1.1"><circle cx="899.7" cy="1011.5" r="6.2"/><path d="M899.7 1010.6 L899.7 1014.8 M899.7 1008.1 L899.7 1008.3" stroke-width="1.4"/></g>
</svg>
<!--/UI-->
</div>
</body>
</html>
